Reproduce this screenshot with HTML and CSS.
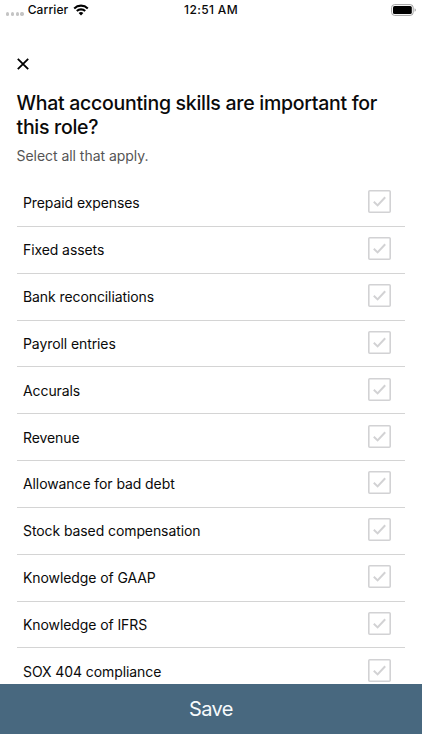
FILE: index.html
```html
<!DOCTYPE html>
<html lang="en">
<head>
    <meta charset="UTF-8">
    <meta name="viewport" content="width=device-width, initial-scale=1.0">
    <title>Accounting Skills</title>
    <link rel="stylesheet" href="styles.css">
</head>
<body>
    <div class="screen">
        <div class="status-bar">
            <div class="status-left">
                <div class="signal"><span></span><span></span><span></span><span></span></div>
                <span class="carrier">Carrier</span>
                <svg class="wifi" viewBox="0 0 16 12">
                    <path d="M1.2 4.4a9.8 9.8 0 0 1 13.6 0M3.8 7.1a6.1 6.1 0 0 1 8.4 0" fill="none" stroke="#000" stroke-width="2.1"/>
                    <path d="M8 11.5L5.6 9.1a3.4 3.4 0 0 1 4.8 0z"/>
                </svg>
            </div>
            <span class="time">12:51 AM</span>
            <svg class="battery" viewBox="0 0 26 12">
                <rect x=".6" y=".6" width="21.6" height="10.8" rx="3" fill="none" stroke="#a0a0a0"/>
                <rect x="2" y="2" width="18.8" height="8" rx="1.6"/>
                <path d="M23.6 4.2v3.6c1.7-.6 1.7-3 0-3.6z" fill="#a0a0a0"/>
            </svg>
        </div>

        <div class="content">
            <button class="close" aria-label="Close">
                <svg viewBox="0 0 12 12"><path d="M.8.8l10.4 10.4M11.2.8L.8 11.2"/></svg>
            </button>
            <h1 class="title"><span class="title-line">What accounting skills are important for</span> this role?</h1>
            <p class="subtitle">Select all that apply.</p>

            <ul class="skills" id="skills"></ul>
        </div>

        <button class="save">Save</button>
    </div>

    <script>
        const skills = [
            'Prepaid expenses',
            'Fixed assets',
            'Bank reconciliations',
            'Payroll entries',
            'Accurals',
            'Revenue',
            'Allowance for bad debt',
            'Stock based compensation',
            'Knowledge of GAAP',
            'Knowledge of IFRS',
            'SOX 404 compliance'
        ];

        const list = document.getElementById('skills');

        skills.forEach(skill => {
            const row = document.createElement('li');
            row.className = 'skill';
            row.innerHTML = `
                <span class="skill-name">${skill}</span>
                <svg class="checkbox" viewBox="0 0 23 23">
                    <rect x=".8" y=".8" width="21.4" height="21.4" rx="1"/>
                    <path class="check" d="M5.8 11.8l3.8 3.6 7.6-8.2"/>
                </svg>`;
            list.appendChild(row);
        });
    </script>
</body>
</html>
```
FILE: styles.css
```css
* {
    box-sizing: border-box;
}

body {
    margin: 0;
    font-family: Inter, "Liberation Sans", sans-serif;
    background-color: #fff;
    color: #0a0a0a;
}

button {
    border: none;
    padding: 0;
    font-family: inherit;
    cursor: pointer;
}

.screen {
    display: flex;
    flex-direction: column;
    height: 750px;
    padding-bottom: 16.5px;
    overflow: hidden;
}

/* Status bar */
.status-bar {
    display: grid;
    grid-template-columns: 1fr auto 1fr;
    align-items: center;
    flex: none;
    height: 20px;
    padding: 0 5px 0 6px;
    font-size: 12px;
    font-weight: 500;
    line-height: 20px;
}

.status-left {
    display: flex;
    align-items: center;
}

.signal {
    display: flex;
    gap: 1.5px;
    margin: 8px 4px 0 0;
}

.signal span {
    width: 3.3px;
    height: 3.3px;
    border-radius: 50%;
    background-color: #c4c4c4;
}

.carrier {
    width: 40px;
    letter-spacing: 0.1px;
    white-space: nowrap;
}

.wifi {
    width: 16px;
    height: 12px;
    margin-left: 5px;
}

.time {
    margin-right: 1px;
    letter-spacing: 0.35px;
}

.battery {
    width: 26px;
    height: 12px;
    justify-self: end;
}

/* Question */
.content {
    flex: 1;
    min-height: 0;
    padding: 38px 17px 0 16.5px;
    overflow: hidden;
}

.close {
    display: block;
    width: 12px;
    height: 12px;
    margin-bottom: 21px;
    background: none;
}

.close svg {
    display: block;
    width: 12px;
    height: 12px;
    fill: none;
    stroke: #000;
    stroke-width: 1.8;
}

.title {
    margin: 0;
    font-size: 19.5px;
    font-weight: 500;
    line-height: 24px;
    letter-spacing: -0.28px;
}

.title-line {
    white-space: nowrap;
}

.subtitle {
    margin: 6px 0 13px;
    font-size: 14px;
    line-height: 22px;
    letter-spacing: -0.04px;
    color: #555;
}

/* Skill list */
.skills {
    margin: 0;
    padding: 0;
    list-style: none;
}

.skill {
    display: flex;
    align-items: center;
    justify-content: space-between;
    height: 46.85px;
    padding: 0 14px 0 6.5px;
    border-bottom: 1px solid #d4d4d4;
}

.skill-name {
    padding-top: 1px;
    font-size: 14px;
    line-height: 20px;
    letter-spacing: -0.09px;
}

.checkbox {
    width: 23px;
    height: 23px;
    margin-bottom: 2px;
    fill: none;
    stroke: #d2d2d4;
    stroke-width: 1.6;
}

.check {
    stroke-width: 2;
}

.save {
    flex: none;
    height: 50px;
    background-color: #48687f;
    color: #f7fafc;
    font-size: 20px;
    letter-spacing: -0.6px;
}
```
